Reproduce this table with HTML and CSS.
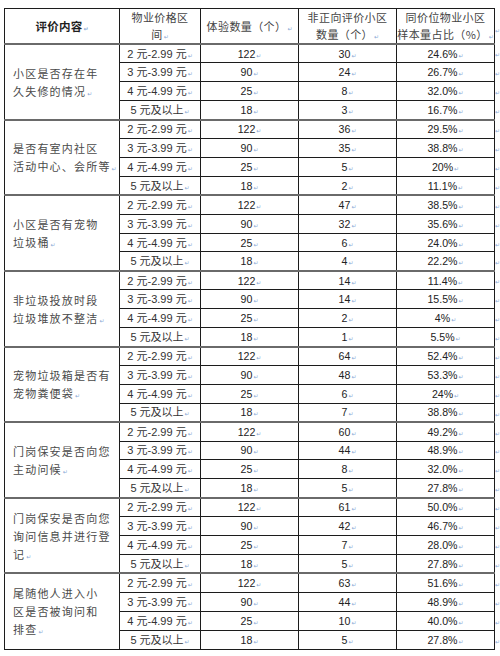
FILE: index.html
```html
<!DOCTYPE html>
<html lang="zh">
<head>
<meta charset="utf-8">
<title>评价内容</title>
<link rel="stylesheet" href="styles.css">
</head>
<body>
<table class="tbl">
<colgroup><col class="c1"><col class="c2"><col class="c3"><col class="c4"><col class="c5"><col class="c6"></colgroup>
<thead>
<tr class="head">
<th class="h-main">评价内容<span class="pm">↵</span></th>
<th>物业价格区<br>间<span class="pm">↵</span></th>
<th>体验数量（个）<span class="pm">↵</span></th>
<th>非正向评价小区<br>数量（个）<span class="pm">↵</span></th>
<th>同价位物业小区<br>样本量占比（%）<span class="pm">↵</span></th>
<td class="end"><span class="pm">↵</span></td>
</tr>
</thead>
<tbody>
<tr class="grp"><td class="item" rowspan="4">小区是否存在年<br>久失修的情况<span class="pm">↵</span></td><td class="price">2 元-2.99 元<span class="pm">↵</span></td><td class="num">122<span class="pm">↵</span></td><td class="num">30<span class="pm">↵</span></td><td class="num">24.6%<span class="pm">↵</span></td><td class="end"><span class="pm">↵</span></td></tr>
<tr><td class="price">3 元-3.99 元<span class="pm">↵</span></td><td class="num">90<span class="pm">↵</span></td><td class="num">24<span class="pm">↵</span></td><td class="num">26.7%<span class="pm">↵</span></td><td class="end"><span class="pm">↵</span></td></tr>
<tr><td class="price">4 元-4.99 元<span class="pm">↵</span></td><td class="num">25<span class="pm">↵</span></td><td class="num">8<span class="pm">↵</span></td><td class="num">32.0%<span class="pm">↵</span></td><td class="end"><span class="pm">↵</span></td></tr>
<tr><td class="price">5 元及以上<span class="pm">↵</span></td><td class="num">18<span class="pm">↵</span></td><td class="num">3<span class="pm">↵</span></td><td class="num">16.7%<span class="pm">↵</span></td><td class="end"><span class="pm">↵</span></td></tr>

<tr class="grp"><td class="item" rowspan="4">是否有室内社区<br>活动中心、会所等<span class="pm">↵</span></td><td class="price">2 元-2.99 元<span class="pm">↵</span></td><td class="num">122<span class="pm">↵</span></td><td class="num">36<span class="pm">↵</span></td><td class="num">29.5%<span class="pm">↵</span></td><td class="end"><span class="pm">↵</span></td></tr>
<tr><td class="price">3 元-3.99 元<span class="pm">↵</span></td><td class="num">90<span class="pm">↵</span></td><td class="num">35<span class="pm">↵</span></td><td class="num">38.8%<span class="pm">↵</span></td><td class="end"><span class="pm">↵</span></td></tr>
<tr><td class="price">4 元-4.99 元<span class="pm">↵</span></td><td class="num">25<span class="pm">↵</span></td><td class="num">5<span class="pm">↵</span></td><td class="num">20%<span class="pm">↵</span></td><td class="end"><span class="pm">↵</span></td></tr>
<tr><td class="price">5 元及以上<span class="pm">↵</span></td><td class="num">18<span class="pm">↵</span></td><td class="num">2<span class="pm">↵</span></td><td class="num">11.1%<span class="pm">↵</span></td><td class="end"><span class="pm">↵</span></td></tr>

<tr class="grp"><td class="item" rowspan="4">小区是否有宠物<br>垃圾桶<span class="pm">↵</span></td><td class="price">2 元-2.99 元<span class="pm">↵</span></td><td class="num">122<span class="pm">↵</span></td><td class="num">47<span class="pm">↵</span></td><td class="num">38.5%<span class="pm">↵</span></td><td class="end"><span class="pm">↵</span></td></tr>
<tr><td class="price">3 元-3.99 元<span class="pm">↵</span></td><td class="num">90<span class="pm">↵</span></td><td class="num">32<span class="pm">↵</span></td><td class="num">35.6%<span class="pm">↵</span></td><td class="end"><span class="pm">↵</span></td></tr>
<tr><td class="price">4 元-4.99 元<span class="pm">↵</span></td><td class="num">25<span class="pm">↵</span></td><td class="num">6<span class="pm">↵</span></td><td class="num">24.0%<span class="pm">↵</span></td><td class="end"><span class="pm">↵</span></td></tr>
<tr><td class="price">5 元及以上<span class="pm">↵</span></td><td class="num">18<span class="pm">↵</span></td><td class="num">4<span class="pm">↵</span></td><td class="num">22.2%<span class="pm">↵</span></td><td class="end"><span class="pm">↵</span></td></tr>

<tr class="grp"><td class="item" rowspan="4">非垃圾投放时段<br>垃圾堆放不整洁<span class="pm">↵</span></td><td class="price">2 元-2.99 元<span class="pm">↵</span></td><td class="num">122<span class="pm">↵</span></td><td class="num">14<span class="pm">↵</span></td><td class="num">11.4%<span class="pm">↵</span></td><td class="end"><span class="pm">↵</span></td></tr>
<tr><td class="price">3 元-3.99 元<span class="pm">↵</span></td><td class="num">90<span class="pm">↵</span></td><td class="num">14<span class="pm">↵</span></td><td class="num">15.5%<span class="pm">↵</span></td><td class="end"><span class="pm">↵</span></td></tr>
<tr><td class="price">4 元-4.99 元<span class="pm">↵</span></td><td class="num">25<span class="pm">↵</span></td><td class="num">2<span class="pm">↵</span></td><td class="num">4%<span class="pm">↵</span></td><td class="end"><span class="pm">↵</span></td></tr>
<tr><td class="price">5 元及以上<span class="pm">↵</span></td><td class="num">18<span class="pm">↵</span></td><td class="num">1<span class="pm">↵</span></td><td class="num">5.5%<span class="pm">↵</span></td><td class="end"><span class="pm">↵</span></td></tr>

<tr class="grp"><td class="item" rowspan="4">宠物垃圾箱是否有<br>宠物粪便袋<span class="pm">↵</span></td><td class="price">2 元-2.99 元<span class="pm">↵</span></td><td class="num">122<span class="pm">↵</span></td><td class="num">64<span class="pm">↵</span></td><td class="num">52.4%<span class="pm">↵</span></td><td class="end"><span class="pm">↵</span></td></tr>
<tr><td class="price">3 元-3.99 元<span class="pm">↵</span></td><td class="num">90<span class="pm">↵</span></td><td class="num">48<span class="pm">↵</span></td><td class="num">53.3%<span class="pm">↵</span></td><td class="end"><span class="pm">↵</span></td></tr>
<tr><td class="price">4 元-4.99 元<span class="pm">↵</span></td><td class="num">25<span class="pm">↵</span></td><td class="num">6<span class="pm">↵</span></td><td class="num">24%<span class="pm">↵</span></td><td class="end"><span class="pm">↵</span></td></tr>
<tr><td class="price">5 元及以上<span class="pm">↵</span></td><td class="num">18<span class="pm">↵</span></td><td class="num">7<span class="pm">↵</span></td><td class="num">38.8%<span class="pm">↵</span></td><td class="end"><span class="pm">↵</span></td></tr>

<tr class="grp"><td class="item" rowspan="4">门岗保安是否向您<br>主动问候<span class="pm">↵</span></td><td class="price">2 元-2.99 元<span class="pm">↵</span></td><td class="num">122<span class="pm">↵</span></td><td class="num">60<span class="pm">↵</span></td><td class="num">49.2%<span class="pm">↵</span></td><td class="end"><span class="pm">↵</span></td></tr>
<tr><td class="price">3 元-3.99 元<span class="pm">↵</span></td><td class="num">90<span class="pm">↵</span></td><td class="num">44<span class="pm">↵</span></td><td class="num">48.9%<span class="pm">↵</span></td><td class="end"><span class="pm">↵</span></td></tr>
<tr><td class="price">4 元-4.99 元<span class="pm">↵</span></td><td class="num">25<span class="pm">↵</span></td><td class="num">8<span class="pm">↵</span></td><td class="num">32.0%<span class="pm">↵</span></td><td class="end"><span class="pm">↵</span></td></tr>
<tr><td class="price">5 元及以上<span class="pm">↵</span></td><td class="num">18<span class="pm">↵</span></td><td class="num">5<span class="pm">↵</span></td><td class="num">27.8%<span class="pm">↵</span></td><td class="end"><span class="pm">↵</span></td></tr>

<tr class="grp"><td class="item" rowspan="4">门岗保安是否向您<br>询问信息并进行登<br>记<span class="pm">↵</span></td><td class="price">2 元-2.99 元<span class="pm">↵</span></td><td class="num">122<span class="pm">↵</span></td><td class="num">61<span class="pm">↵</span></td><td class="num">50.0%<span class="pm">↵</span></td><td class="end"><span class="pm">↵</span></td></tr>
<tr><td class="price">3 元-3.99 元<span class="pm">↵</span></td><td class="num">90<span class="pm">↵</span></td><td class="num">42<span class="pm">↵</span></td><td class="num">46.7%<span class="pm">↵</span></td><td class="end"><span class="pm">↵</span></td></tr>
<tr><td class="price">4 元-4.99 元<span class="pm">↵</span></td><td class="num">25<span class="pm">↵</span></td><td class="num">7<span class="pm">↵</span></td><td class="num">28.0%<span class="pm">↵</span></td><td class="end"><span class="pm">↵</span></td></tr>
<tr><td class="price">5 元及以上<span class="pm">↵</span></td><td class="num">18<span class="pm">↵</span></td><td class="num">5<span class="pm">↵</span></td><td class="num">27.8%<span class="pm">↵</span></td><td class="end"><span class="pm">↵</span></td></tr>

<tr class="grp"><td class="item" rowspan="4">尾随他人进入小<br>区是否被询问和<br>排查<span class="pm">↵</span></td><td class="price">2 元-2.99 元<span class="pm">↵</span></td><td class="num">122<span class="pm">↵</span></td><td class="num">63<span class="pm">↵</span></td><td class="num">51.6%<span class="pm">↵</span></td><td class="end"><span class="pm">↵</span></td></tr>
<tr><td class="price">3 元-3.99 元<span class="pm">↵</span></td><td class="num">90<span class="pm">↵</span></td><td class="num">44<span class="pm">↵</span></td><td class="num">48.9%<span class="pm">↵</span></td><td class="end"><span class="pm">↵</span></td></tr>
<tr><td class="price">4 元-4.99 元<span class="pm">↵</span></td><td class="num">25<span class="pm">↵</span></td><td class="num">10<span class="pm">↵</span></td><td class="num">40.0%<span class="pm">↵</span></td><td class="end"><span class="pm">↵</span></td></tr>
<tr><td class="price">5 元及以上<span class="pm">↵</span></td><td class="num">18<span class="pm">↵</span></td><td class="num">5<span class="pm">↵</span></td><td class="num">27.8%<span class="pm">↵</span></td><td class="end"><span class="pm">↵</span></td></tr>
</tbody>
</table>
</body>
</html>
```

FILE: styles.css
```css
html, body {
  margin: 0;
  padding: 0;
  background: #ffffff;
}
body {
  padding: 8px 0 0 4px;
  font-family: "Noto Sans CJK SC", sans-serif;
  color: #3c3c3c;
}
.tbl {
  border-collapse: collapse;
  table-layout: fixed;
  width: 495px;
}
.c1 { width: 115px; }
.c2 { width: 81px; }
.c3 { width: 98px; }
.c4 { width: 98px; }
.c5 { width: 98px; }
.c6 { width: 5px; }

.tbl th,
.tbl td {
  border: 1px solid #1c1c1c;
  padding: 0;
  text-align: center;
  vertical-align: middle;
  white-space: nowrap;
}
.tbl td.end {
  border: none;
  text-align: left;
  padding: 0;
}
.tbl td.end .pm {
  margin-left: 0;
}
.head {
  height: 35px;
}
.head th {
  font-weight: normal;
  font-size: 11px;
  line-height: 17px;
  letter-spacing: 0.4px;
  color: #444444;
}
.head th.h-main {
  font-weight: bold;
  font-size: 11.5px;
  color: #1e1e1e;
  letter-spacing: 0.3px;
}
tbody tr {
  height: 18.92px;
}
tbody td {
  font-size: 10.6px;
  line-height: 12px;
}
.tbl tr.grp td {
  border-top: 2px solid #6a6a6a;
}
.tbl tr.grp td.end {
  border-top: none;
}
.tbl td.item {
  text-align: left;
  padding-left: 8px;
  font-size: 11px;
  line-height: 18px;
  letter-spacing: 1.2px;
  color: #4a4a4a;
}
.tbl td.price {
  font-family: "Liberation Sans", "Noto Sans CJK SC", sans-serif;
  font-size: 11px;
  color: #333333;
}
.tbl td.num {
  font-family: "Liberation Sans", sans-serif;
  font-size: 10.6px;
  color: #222222;
}
.pm {
  font-family: "DejaVu Sans", sans-serif;
  font-size: 6px;
  line-height: 6px;
  color: #8aaad6;
  letter-spacing: 0;
  margin-left: 1px;
}
```
